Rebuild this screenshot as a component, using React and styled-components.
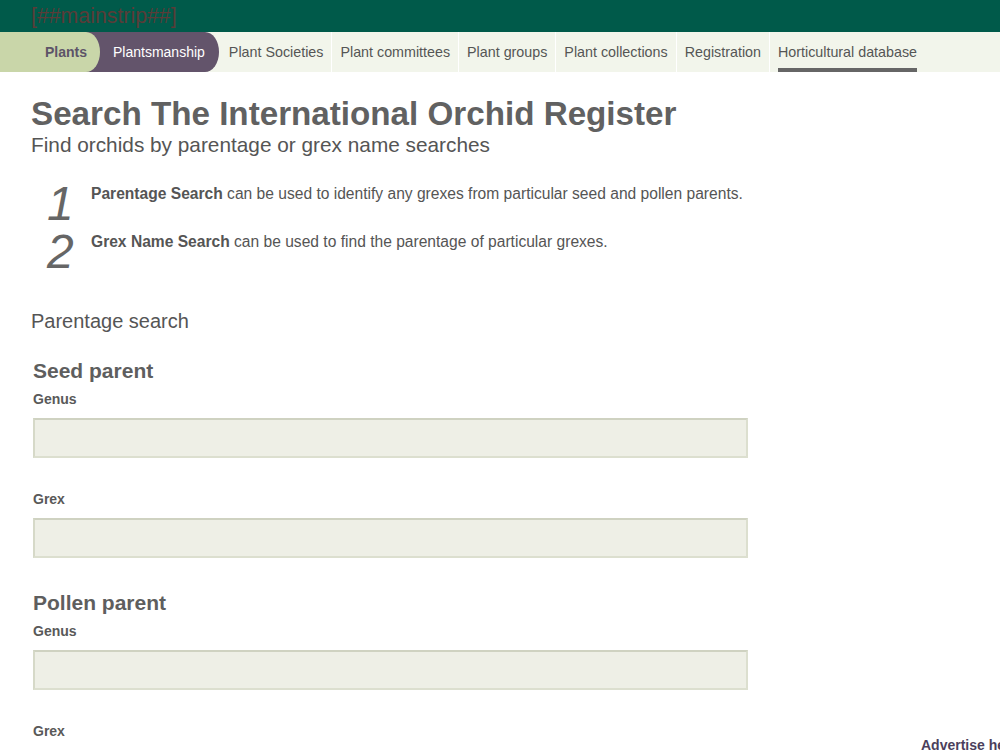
import React from 'react'
import styled, {createGlobalStyle} from "styled-components";

const GlobalStyle = createGlobalStyle`
  html, body {
    margin: 0;
    padding: 0;
    background: #fff;
    overflow-x: hidden;
  }
  body {
    font-family: "Liberation Sans", Arial, sans-serif;
    color: #555;
  }
`;

const TopStrip = styled.div`
  height: 32px;
  background-color: #005a4a;
  padding-left: 31px;
  display: flex;
  align-items: center;
  font-size: 21.3px;
  line-height: 32px;
  color: #5a3c38;
`;

const NavBar = styled.ul`
  display: flex;
  margin: 0;
  padding: 0;
  list-style: none;
  height: 40px;
  background-color: #f2f5eb;
`;

const SectionTab = styled.li`
  position: relative;
  z-index: ${props => props.layer || 1};
  display: flex;
  align-items: center;
  height: 40px;
  box-sizing: border-box;
  padding: 0 ${props => props.right || 14}px 0 ${props => props.left || 27}px;
  margin-left: ${props => props.overlap ? "-14px" : "0"};
  background-color: ${props => props.color};
  color: ${props => props.textColor};
  font-weight: ${props => props.bold ? "bold" : "normal"};
  font-size: 14px;
  border-radius: 0 14px 14px 0 / 0 50% 50% 0;
`;

const NavItem = styled.li`
  display: flex;
  height: 40px;
  padding: 0 8px;
  margin-left: ${props => props.first ? "2px" : "0"};
  border-right: ${props => props.last ? "none" : "1px solid #fff"};
`;

const NavLink = styled.a`
  display: flex;
  align-items: center;
  box-sizing: border-box;
  height: 40px;
  padding-top: 4px;
  font-size: 14.3px;
  color: #555;
  text-decoration: none;
  white-space: nowrap;
  border-bottom: 4px solid ${props => props.active ? "#666" : "transparent"};
`;

const PageRow = styled.div`
  display: flex;
`;

const Main = styled.main`
  width: 750px;
  flex-shrink: 0;
  box-sizing: border-box;
  padding: 24px 0 0 31px;
`;

const Sidebar = styled.aside`
  margin-left: 171px;
  padding-top: 664px;
  white-space: nowrap;
`;

const AdLink = styled.a`
  font-size: 14px;
  font-weight: bold;
  color: #4b3f5c;
  text-decoration: none;
`;

const Title = styled.h1`
  margin: 0;
  font-size: 33.2px;
  line-height: 36px;
  font-weight: bold;
  color: #616161;
`;

const Subtitle = styled.p`
  margin: 1px 0 0 0;
  font-size: 20.8px;
  line-height: 24px;
  color: #555;
`;

const Steps = styled.ol`
  list-style: none;
  margin: 23px 0 0 0;
  padding: 0 0 0 16px;
`;

const Step = styled.li`
  display: flex;
  align-items: flex-start;
  height: 48px;
`;

const StepNumber = styled.span`
  width: 44px;
  flex-shrink: 0;
  font-size: 48px;
  line-height: 48px;
  font-style: italic;
  color: #666;
`;

const StepText = styled.p`
  margin: 4px 0 0 0;
  font-size: 15.6px;
  line-height: 20px;
  white-space: nowrap;
  color: #555;

  strong {
    color: #555;
  }
`;

const SearchTitle = styled.h2`
  margin: 33px 0 0 0;
  font-size: 20px;
  line-height: 24px;
  font-weight: normal;
  color: #555;
`;

const SearchForm = styled.form`
  margin: 26px 0 0 2px;
`;

const Group = styled.fieldset`
  border: none;
  margin: 0 0 1px 0;
  padding: 0;
`;

const GroupTitle = styled.h3`
  margin: 0 0 7px 0;
  font-size: 21px;
  line-height: 24px;
  font-weight: bold;
  color: #5e5e5e;
`;

const Field = styled.div`
  display: flex;
  flex-direction: column;
  margin-bottom: 32px;
`;

const Label = styled.label`
  font-size: 14px;
  line-height: 18px;
  font-weight: bold;
  color: #595959;
  margin-bottom: 10px;
`;

const TextInput = styled.input`
  width: 715px;
  height: 40px;
  box-sizing: border-box;
  margin: 0;
  padding: 0 8px;
  background-color: #eeefe6;
  border: 2px solid #dcdfcf;
  border-top-color: #cfd2c1;
  border-left-color: #d6d9c8;
  font-family: inherit;
  font-size: 14px;
  outline: none;
`;

const links = ["Plant Societies", "Plant committees", "Plant groups", "Plant collections", "Registration", "Horticultural database"];

const groups = [
  {title: "Seed parent", key: "seed"},
  {title: "Pollen parent", key: "pollen"},
];

export default function App() {
  return (
    <React.Fragment>
      <GlobalStyle/>
      <TopStrip>[##mainstrip##]</TopStrip>
      <NavBar>
        <SectionTab layer={2} left={45} right={13} color="#c9d6a9" textColor="#5d5468" bold>Plants</SectionTab>
        <SectionTab overlap left={27} right={14} color="#63546b" textColor="#fff">Plantsmanship</SectionTab>
        {links.map((link, index) => (
          <NavItem key={link} first={index === 0} last={index === links.length - 1}>
            <NavLink href="#" active={index === links.length - 1}>{link}</NavLink>
          </NavItem>
        ))}
      </NavBar>
      <PageRow>
        <Main>
          <Title>Search The International Orchid Register</Title>
          <Subtitle>Find orchids by parentage or grex name searches</Subtitle>
          <Steps>
            <Step>
              <StepNumber>1</StepNumber>
              <StepText><strong>Parentage Search</strong> can be used to identify any grexes from particular seed and pollen parents.</StepText>
            </Step>
            <Step>
              <StepNumber>2</StepNumber>
              <StepText><strong>Grex Name Search</strong> can be used to find the parentage of particular grexes.</StepText>
            </Step>
          </Steps>
          <SearchTitle>Parentage search</SearchTitle>
          <SearchForm>
            {groups.map(group => (
              <Group key={group.key}>
                <GroupTitle>{group.title}</GroupTitle>
                <Field>
                  <Label htmlFor={group.key + "-genus"}>Genus</Label>
                  <TextInput id={group.key + "-genus"} type="text"/>
                </Field>
                <Field>
                  <Label htmlFor={group.key + "-grex"}>Grex</Label>
                  <TextInput id={group.key + "-grex"} type="text"/>
                </Field>
              </Group>
            ))}
          </SearchForm>
        </Main>
        <Sidebar>
          <AdLink href="#">Advertise here</AdLink>
        </Sidebar>
      </PageRow>
    </React.Fragment>
  );
}
